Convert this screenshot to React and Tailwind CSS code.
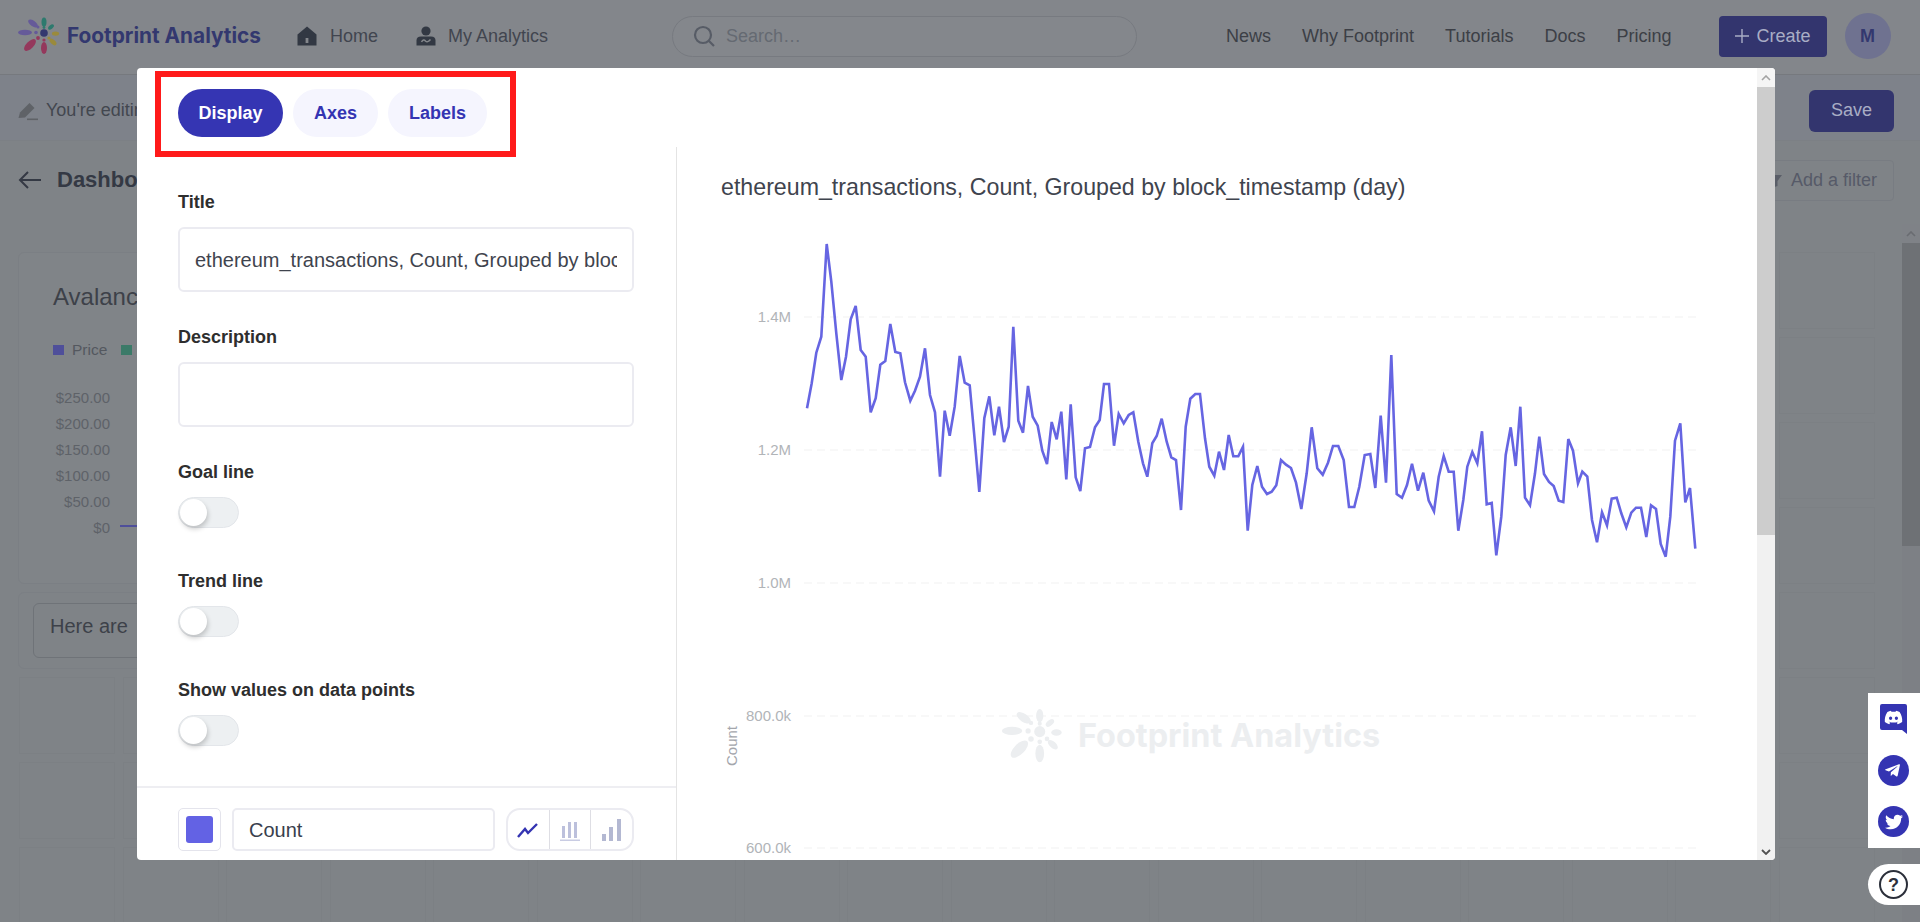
import { FaDiscord, FaTelegramPlane, FaTwitter } from "react-icons/fa"

const leftPts = [[321,565],[335,490],[349,398],[364,350],[380,72],[394,185],[409,340],[424,480],[438,410],[452,298],[467,258],[482,390],[497,410],[512,577],[527,535],[541,434],[556,423],[571,312],[586,396],[601,400],[615,487],[631,542],[645,512],[660,470],[675,385],[690,525],[705,577],[720,770],[734,572],[749,647],[764,560],[779,408],[794,488],[809,496],[824,660],[838,816],[853,595],[868,529],[883,646],[897,560],[912,666],[926,620],[940,320],[955,602],[969,638],[984,498],[998,590],[1013,617],[1027,692],[1041,732],[1055,606],[1070,658],[1084,575],[1099,778],[1112,553],[1127,772],[1141,813],[1155,685],[1170,681],[1185,622],[1199,600],[1212,492],[1227,492],[1242,677],[1256,582],[1271,610],[1286,585],[1300,577],[1315,665],[1329,730],[1342,770],[1357,670],[1370,648],[1385,596],[1400,665],[1414,712],[1428,720],[1443,870],[1457,620],[1471,536],[1486,522],[1500,522]]
const rightPts = [[15,655],[28,740],[43,767],[57,695],[72,750],[86,645],[100,709],[115,709],[129,680],[143,932],[157,795],[172,738],[186,800],[201,822],[215,815],[229,796],[243,720],[258,734],[273,744],[288,788],[304,867],[320,760],[335,622],[352,745],[368,764],[384,728],[399,678],[415,678],[431,720],[447,861],[463,861],[478,800],[494,705],[511,702],[526,804],[542,587],[558,788],[574,405],[590,822],[606,833],[621,795],[636,731],[654,812],[670,758],[686,842],[702,874],[716,770],[731,708],[746,755],[761,755],[775,932],[790,840],[802,740],[817,696],[832,730],[846,634],[860,853],[875,849],[889,1006],[904,890],[917,705],[932,622],[947,738],[961,560],[975,833],[990,856],[1005,760],[1018,650],[1032,762],[1047,786],[1061,798],[1076,842],[1090,846],[1105,657],[1119,692],[1134,790],[1147,755],[1162,770],[1176,900],[1191,967],[1206,877],[1221,916],[1235,836],[1250,833],[1264,880],[1279,922],[1294,878],[1308,863],[1323,863],[1339,951],[1353,856],[1368,867],[1382,972],[1397,1010],[1411,890],[1425,662],[1441,610],[1456,847],[1470,804],[1486,986]]

const linePoints = [
    ...leftPts.map(([x, y]) => `${(700 + x / 3).toFixed(1)},${(220 + y / 3).toFixed(1)}`),
    ...rightPts.map(([x, y]) => `${(1200 + x / 3).toFixed(1)},${(220 + y / 3).toFixed(1)}`),
].join(" ")

const yTicks = [
    { label: "1.4M", y: 317 },
    { label: "1.2M", y: 450 },
    { label: "1.0M", y: 583 },
    { label: "800.0k", y: 716 },
    { label: "600.0k", y: 848 },
]

const Logo = ({ className, colors }) => (
    <svg viewBox="0 0 44 38" className={className}>
        <ellipse cx="9" cy="15.5" rx="7" ry="2.8" fill={colors.purple} />
        <ellipse cx="17" cy="6.5" rx="5.6" ry="2.8" fill={colors.purple} transform="rotate(35 17 6.5)" />
        <ellipse cx="28" cy="5" rx="2.5" ry="4.6" fill={colors.green} />
        <ellipse cx="35" cy="10" rx="3.4" ry="1.9" fill={colors.green} transform="rotate(-40 35 10)" />
        <ellipse cx="39.5" cy="16.6" rx="3.6" ry="2.2" fill={colors.gold} />
        <ellipse cx="37" cy="25" rx="4.2" ry="2.2" fill={colors.gold} transform="rotate(42 37 25)" />
        <ellipse cx="28" cy="31" rx="3" ry="6" fill={colors.red} />
        <ellipse cx="14" cy="28" rx="7.6" ry="3.6" fill={colors.red} transform="rotate(-45 14 28)" />
        <circle cx="22" cy="21" r="1.9" fill={colors.red} />
        <circle cx="28" cy="23" r="1.6" fill={colors.red} />
        <circle cx="33" cy="21" r="1.6" fill={colors.gold} />
        <circle cx="20" cy="15.5" r="1.8" fill={colors.purple} />
        <circle cx="22" cy="10" r="1.5" fill={colors.purple} />
        <circle cx="28" cy="10.5" r="1.4" fill={colors.green} />
        <circle cx="28" cy="16" r="3.8" fill={colors.center} />
    </svg>
)

const Toggle = () => (
    <div className="relative mt-[13px] h-[31px] w-[61px] rounded-full border border-[#e3e6ea] bg-[#edf0f2]">
        <div className="absolute left-[1px] top-[1px] h-[27px] w-[27px] rounded-full bg-white shadow-[1px_3px_5px_rgba(0,0,0,0.2)]" />
    </div>
)

const FieldLabel = ({ children, className = "" }) => (
    <p className={`h-[24px] text-[18px] font-bold leading-[24px] text-[#2e2e2e] ${className}`}>{children}</p>
)

const App = () => {
    const cells = Array.from({ length: 99 })

    return (
        <div className="relative h-[922px] w-full overflow-hidden bg-[#7f8387] font-['Liberation_Sans',sans-serif]">
            {/* page under the dim layer */}
            <nav className="flex h-[75px] items-center border-b border-[#76797e] bg-[#83868b] pb-[2px]">
                <Logo
                    className="ml-[16px] h-[38px] w-[44px]"
                    colors={{ purple: "#655a99", green: "#2d7a6e", gold: "#9a8a3c", red: "#94385c", center: "#33386f" }}
                />
                <span className="ml-[7px] font-['Inter',sans-serif] text-[20.8px] font-bold text-[#33386f]">Footprint Analytics</span>
                <svg viewBox="0 0 20 20" className="ml-[36px] h-[20px] w-[20px]" fill="#323843">
                    <path d="M10 0.5 L19.5 8.5 V19.5 H0.5 V8.5 Z" />
                    <rect x="8.6" y="12" width="2.8" height="5" fill="#83868b" />
                </svg>
                <span className="ml-[13px] text-[18px] text-[#41454f]">Home</span>
                <svg viewBox="0 0 20 20" className="ml-[38px] h-[20px] w-[20px]" fill="#323843">
                    <circle cx="10" cy="5" r="4.6" />
                    <path d="M0.5 19.5 V14.5 Q0.5 10.5 5 10.5 H15 Q19.5 10.5 19.5 14.5 V19.5 Z" />
                    <path d="M5.5 16 Q7.5 12.5 9.5 15 Q11.5 17 14.5 13.5" fill="none" stroke="#83868b" strokeWidth="1.5" />
                </svg>
                <span className="ml-[12px] text-[18px] text-[#41454f]">My Analytics</span>
                <div className="ml-[124px] flex h-[41px] w-[465px] items-center rounded-full border border-[#777a80] bg-[#84878c] pl-[20px]">
                    <svg viewBox="0 0 22 22" className="h-[22px] w-[22px]" fill="none" stroke="#575c66" strokeWidth="2.2">
                        <circle cx="10" cy="10" r="8" />
                        <path d="M16 16 L21 21" />
                    </svg>
                    <span className="ml-[11px] text-[18px] text-[#656a72]">Search…</span>
                </div>
                <div className="ml-[89px] flex gap-[31px] text-[18px] text-[#3c3f46]">
                    <span>News</span>
                    <span>Why Footprint</span>
                    <span>Tutorials</span>
                    <span>Docs</span>
                    <span>Pricing</span>
                </div>
                <button className="ml-[47px] flex h-[41px] w-[108px] items-center justify-center gap-[8px] rounded-[4px] bg-[#33356e] text-[18px] text-[#a9adc5]">
                    <svg viewBox="0 0 14 14" className="h-[14px] w-[14px]" stroke="#a9adc5" strokeWidth="1.4">
                        <path d="M7 0 V14 M0 7 H14" />
                    </svg>
                    Create
                </button>
                <div className="ml-[18px] flex h-[46px] w-[46px] items-center justify-center rounded-full bg-[#6f7290] text-[18px] font-bold text-[#33386f]">M</div>
            </nav>

            <div className="flex h-[66px] items-center justify-between border-b border-[#7c8085] bg-[#7e828a] pl-[18px] pr-[26px] pt-[6px]">
                <div className="flex items-center">
                    <svg viewBox="0 0 20 20" className="h-[20px] w-[20px]" fill="#5f6267">
                        <path d="M0.5 17 L2 11.5 L11.5 2 L16.5 7 L7 16.5 Z" />
                        <rect x="9" y="17.5" width="11" height="1.6" />
                    </svg>
                    <span className="ml-[8px] text-[18px] text-[#43474f]">You're editing this dashboard.</span>
                </div>
                <button className="h-[42px] w-[85px] rounded-[6px] bg-[#33356e] text-[18px] text-[#a9adc5]">Save</button>
            </div>

            <div className="flex h-[111px] items-start justify-between pl-[18px] pr-[26px] pt-[19px]">
                <div className="flex items-center pt-[3px]">
                    <svg viewBox="0 0 24 20" className="h-[20px] w-[24px]" fill="none" stroke="#343944" strokeWidth="2">
                        <path d="M23 10 H2 M10 2 L2 10 L10 18" />
                    </svg>
                    <span className="ml-[15px] text-[22px] font-bold text-[#343944]">Dashboard</span>
                </div>
                <div className="flex h-[41px] items-center rounded-[4px] border border-[#787c82] pl-[12px] pr-[16px]">
                    <svg viewBox="0 0 12 12" className="h-[12px] w-[12px]" fill="#5a5e68">
                        <path d="M0 0 H12 L7.5 6 V11 L4.5 12 V6 Z" />
                    </svg>
                    <span className="ml-[9px] text-[18px] text-[#565a68]">Add a filter</span>
                </div>
            </div>

            <div className="ml-[19px] grid grid-cols-[repeat(18,96px)] grid-rows-[repeat(8,77px)] gap-x-[7.5px] gap-y-[8px]">
                <div className="relative col-start-1 col-span-9 row-start-1 row-span-4 -ml-[1px] rounded-[6px] border border-[#7b7f84] bg-[#808488] pl-[34px] pt-[30px]">
                    <p className="text-[24px] leading-[28px] text-[#3d4149]">Avalanche</p>
                    <div className="mt-[27px] flex items-center text-[15.5px] text-[#54585f]">
                        <span className="h-[10px] w-[11px] bg-[#4f4f9a]" />
                        <span className="ml-[8px]">Price</span>
                        <span className="ml-[14px] h-[10px] w-[11px] bg-[#3b7a68]" />
                    </div>
                    <div className="mt-[28px] flex w-[57px] flex-col items-end gap-[8px] text-[15px] leading-[18px] text-[#5e6268]">
                        <span>$250.00</span>
                        <span>$200.00</span>
                        <span>$150.00</span>
                        <span>$100.00</span>
                        <span>$50.00</span>
                        <span>$0</span>
                    </div>
                    <div className="absolute left-[101px] top-[272px] h-[2px] w-[30px] bg-[#4f4f9a]" />
                </div>
                <div className="col-start-1 col-span-9 row-start-5 -ml-[1px] rounded-[6px] border border-[#7b7f84] p-[10px] pl-[14px]">
                    <div className="flex h-[55px] items-center rounded-[6px] border border-[#6f7378] pb-[10px] pl-[16px] text-[20px] text-[#3d4149]">Here are</div>
                </div>
                {cells.map((_, index) => (
                    <div key={index} className="border border-[#7c8084]" />
                ))}
            </div>

            {/* page scrollbar */}
            <div className="absolute right-0 top-[224px] flex h-[698px] w-[18px] flex-col bg-[#7d8085]">
                <div className="flex h-[19px] items-center justify-center bg-[#7f8287]">
                    <svg viewBox="0 0 10 6" className="h-[6px] w-[10px]" fill="none" stroke="#696c71" strokeWidth="1.6">
                        <path d="M1 5 L5 1 L9 5" />
                    </svg>
                </div>
                <div className="h-[303px] bg-[#6e7175]" />
            </div>

            {/* side links */}
            <div className="absolute right-0 top-[693px] flex h-[155px] w-[52px] flex-col items-center bg-white pr-[1px] pt-[11px]">
                <div className="relative h-[30px] w-[27px]">
                    <svg viewBox="0 0 27 30" className="absolute inset-0 h-[30px] w-[27px]" fill="#3434b2">
                        <path d="M2 0 H25 Q27 0 27 2 V30 L22 26 H2 Q0 26 0 24 V2 Q0 0 2 0 Z" />
                    </svg>
                    <FaDiscord className="absolute left-[4px] top-[4px] h-[19px] w-[19px] text-white" />
                </div>
                <div className="mt-[21px] flex h-[31px] w-[31px] items-center justify-center rounded-full bg-[#3434b2]">
                    <FaTelegramPlane className="h-[17px] w-[17px] -translate-x-[1px] text-white" />
                </div>
                <div className="mt-[20px] flex h-[31px] w-[31px] items-center justify-center rounded-full bg-[#3434b2]">
                    <FaTwitter className="h-[18px] w-[18px] text-white" />
                </div>
            </div>
            <div className="absolute right-0 top-[864px] flex h-[41px] w-[52px] items-center rounded-l-full bg-white pl-[11px]">
                <div className="flex h-[29px] w-[29px] items-center justify-center rounded-full border-2 border-[#2b2f3a] text-[18px] font-bold leading-none text-[#2b2f3a]">?</div>
            </div>

            {/* modal */}
            <div className="absolute left-[137px] top-[68px] flex h-[792px] w-[1638px] overflow-hidden rounded-[4px] bg-white">
                <div className="flex min-w-0 flex-1 flex-col">
                    <div className="flex h-[79px] shrink-0 items-start gap-[10px] pl-[41px] pt-[21px]">
                        <button className="h-[48px] w-[105px] rounded-full bg-[#3535b3] text-[18px] font-bold text-white">Display</button>
                        <button className="h-[48px] w-[85px] rounded-full bg-[#f5f5fe] text-[18px] font-bold text-[#3434b2]">Axes</button>
                        <button className="h-[48px] w-[99px] rounded-full bg-[#f5f5fe] text-[18px] font-bold text-[#3434b2]">Labels</button>
                    </div>
                    <div className="flex min-h-0 flex-1">
                        <div className="flex w-[540px] shrink-0 flex-col border-r border-[#e4e4e4]">
                            <div className="flex-1 pl-[41px] pr-[42px] pt-[43px]">
                                <FieldLabel>Title</FieldLabel>
                                <div className="mt-[13px] flex h-[65px] items-center overflow-hidden rounded-[6px] border-2 border-[#ebebf1] px-[15px]">
                                    <span className="overflow-hidden whitespace-nowrap text-[20px] text-[#3f444e]">ethereum_transactions, Count, Grouped by block_timestamp (day)</span>
                                </div>
                                <FieldLabel className="mt-[33px]">Description</FieldLabel>
                                <div className="mt-[13px] h-[65px] rounded-[6px] border-2 border-[#ebebf1]" />
                                <FieldLabel className="mt-[33px]">Goal line</FieldLabel>
                                <Toggle />
                                <FieldLabel className="mt-[41px]">Trend line</FieldLabel>
                                <Toggle />
                                <FieldLabel className="mt-[41px]">Show values on data points</FieldLabel>
                                <Toggle />
                            </div>
                            <div className="flex h-[74px] shrink-0 items-start gap-[11px] border-t-2 border-[#eeeef2] pl-[41px] pt-[20px]">
                                <div className="flex h-[43px] w-[43px] items-center justify-center rounded-[5px] border border-[#e4e4ec]">
                                    <div className="h-[27px] w-[27px] rounded-[3px] bg-[#6362e4]" />
                                </div>
                                <div className="flex h-[43px] w-[263px] items-center rounded-[5px] border-2 border-[#ebebf1] pl-[15px] text-[20px] text-[#39404d]">Count</div>
                                <div className="flex h-[43px] w-[128px] rounded-[14px] border-2 border-[#ebebf1]">
                                    <div className="flex flex-1 items-center justify-center border-r border-[#dedee4]">
                                        <svg viewBox="0 0 22 16" className="h-[16px] w-[22px]" fill="none" stroke="#3434b2" strokeWidth="2.4">
                                            <path d="M1 15 L8 7 L11 11 L20 2" />
                                        </svg>
                                    </div>
                                    <div className="flex flex-1 items-center justify-center border-r border-[#dedee4]">
                                        <svg viewBox="0 0 20 22" className="h-[22px] w-[20px]" fill="#bcc0dc">
                                            <rect x="2" y="7" width="3" height="12" />
                                            <rect x="8" y="3" width="3" height="16" />
                                            <rect x="14" y="3" width="3" height="16" />
                                            <rect x="0" y="20.6" width="20" height="1.2" />
                                        </svg>
                                    </div>
                                    <div className="flex flex-1 items-center justify-center">
                                        <svg viewBox="0 0 20 22" className="h-[22px] w-[20px]" fill="#b3b8d2">
                                            <rect x="0" y="15" width="4" height="7" />
                                            <rect x="7" y="8" width="4" height="14" />
                                            <rect x="15" y="0" width="4" height="22" />
                                        </svg>
                                    </div>
                                </div>
                            </div>
                        </div>
                        <div className="min-w-0 flex-1" />
                    </div>
                </div>

                {/* chart drawn in page coordinates, over the right pane */}
                <svg viewBox="677 68 1080 792" className="absolute left-[540px] top-0 h-[792px] w-[1080px]">
                    <text x="721" y="195" fontSize="23.2" fill="#3f444e">ethereum_transactions, Count, Grouped by block_timestamp (day)</text>
                    {yTicks.map(tick => (
                        <g key={tick.label}>
                            <line x1="804" x2="1700" y1={tick.y} y2={tick.y} stroke="#f2f2f2" strokeWidth="1.2" strokeDasharray="8 5" />
                            <text x="791" y={tick.y + 5} textAnchor="end" fontSize="15" fill="#b1b4b8">{tick.label}</text>
                        </g>
                    ))}
                    <text transform="translate(737 746) rotate(-90)" textAnchor="middle" fontSize="15" fill="#a3a6ac">Count</text>
                    <polyline points={linePoints} fill="none" stroke="#6665e2" strokeWidth="2.6" strokeLinejoin="miter" />
                </svg>
                <div className="absolute left-[862px] top-[640px] flex items-center">
                    <Logo
                        className="h-[56px] w-[64px]"
                        colors={{ purple: "#eceef0", green: "#eceef0", gold: "#eceef0", red: "#eceef0", center: "#eceef0" }}
                    />
                    <span className="ml-[15px] font-['Inter',sans-serif] text-[32.4px] font-bold text-[#eceef0]">Footprint Analytics</span>
                </div>

                {/* modal scrollbar */}
                <div className="z-10 flex w-[18px] shrink-0 flex-col items-center bg-[#f1f1f1]">
                    <div className="flex h-[19px] w-full items-center justify-center bg-[#f5f5f5]">
                        <svg viewBox="0 0 10 6" className="h-[6px] w-[10px]" fill="none" stroke="#a3a3a3" strokeWidth="1.6">
                            <path d="M1 5 L5 1 L9 5" />
                        </svg>
                    </div>
                    <div className="h-[448px] w-full bg-[#cdcdcd]" />
                    <div className="flex-1" />
                    <svg viewBox="0 0 10 6" className="mb-[5px] h-[6px] w-[10px]" fill="none" stroke="#505050" strokeWidth="1.8">
                        <path d="M1 1 L5 5 L9 1" />
                    </svg>
                </div>
            </div>

            {/* red highlight box */}
            <div className="absolute left-[155px] top-[71px] h-[86px] w-[361px] border-[6px] border-[#ff1a1a]" />
        </div>
    )
}

export default App
